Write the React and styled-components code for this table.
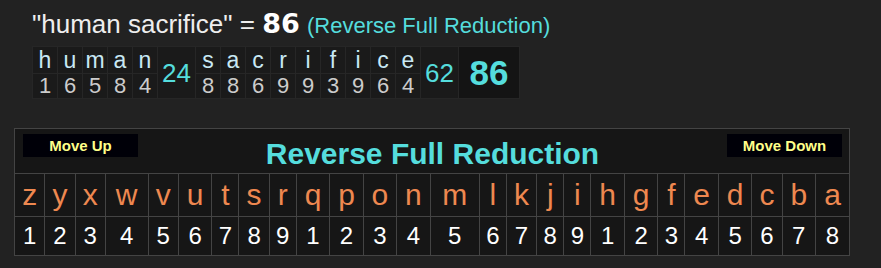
import React from 'react';
import styled, { createGlobalStyle } from 'styled-components';

const GlobalStyle = createGlobalStyle`
  body {
    margin: 0;
    background: #222222;
    font-family: "Liberation Sans", Arial, sans-serif;
  }
`;

const Page = styled.div`
  padding: 9px 14px 0 14px;
`;

const Summary = styled.div`
  padding-left: 18px;
`;

const Heading = styled.div`
  color: #eeeeee;
  font-size: 26px;
  line-height: 30px;
  white-space: nowrap;
`;

const Total = styled.span`
  font-family: "DejaVu Sans", Verdana, sans-serif;
  font-size: 27px;
  font-weight: bold;
  color: #ffffff;
`;

const CipherName = styled.span`
  font-size: 22px;
  color: #55dddd;
`;

const Breakdown = styled.table`
  margin-top: 5px;
  border-collapse: collapse;
  background: #1a1a1a;
  td {
    border: 1px solid #262626;
    padding: 0;
    text-align: center;
  }
`;

const Letter = styled.td`
  width: 24px;
  height: 26px;
  line-height: 26px;
  color: #c8e8f4;
  font-size: 23px;
`;

const Digit = styled.td`
  height: 24px;
  line-height: 24px;
  color: #cccccc;
  font-size: 22px;
`;

const WordSum = styled.td`
  width: 37px;
  color: #55dddd;
  font-size: 26px;
  line-height: 30px;
`;

const PhraseSum = styled.td`
  width: 60px;
  background: #141414;
  color: #55dddd;
  font-size: 35px;
  font-weight: bold;
  line-height: 40px;
`;

const Chart = styled.table`
  margin-top: 29px;
  width: 836px;
  border-collapse: collapse;
  background: #161616;
  border: 1px solid #444444;
  td {
    border: 1px solid #444444;
    padding: 0;
    text-align: center;
  }
`;

const HeaderCell = styled.td`
  height: 44px;
  vertical-align: top;
`;

const HeaderBar = styled.div`
  display: grid;
  grid-template-columns: 115px 1fr 115px;
  align-items: start;
  padding: 5px 7px 0 8px;
`;

const MoveButton = styled.button`
  height: 23px;
  border: none;
  background: #000008;
  color: #ffff88;
  font-family: "Liberation Sans", Arial, sans-serif;
  font-size: 15px;
  font-weight: bold;
  padding: 0;
`;

const Title = styled.div`
  color: #55dddd;
  font-size: 30px;
  font-weight: bold;
  line-height: 32px;
  padding-top: 4px;
`;

const Cell = styled.td`
  height: ${(p) => p.h}px;
  color: ${(p) => p.color};
  font-size: ${(p) => p.size}px;
`;

const words = [
  { letters: 'human', values: [1, 6, 5, 8, 4], sum: 24 },
  { letters: 'sacrifice', values: [8, 8, 6, 9, 9, 3, 9, 6, 4], sum: 62 },
];

const alphabet = 'zyxwvutsrqponmlkjihgfedcba'.split('');
const reduce = (i) => (i % 9) + 1;

export default function App() {
  return (
    <>
      <GlobalStyle />
      <Page>
        <Summary>
          <Heading>
            "human sacrifice" = <Total>86</Total>{' '}
            <CipherName>(Reverse Full Reduction)</CipherName>
          </Heading>
          <Breakdown>
            <tbody>
              <tr>
                {words.map((w) => (
                  <React.Fragment key={w.letters}>
                    {w.letters.split('').map((ch, i) => (
                      <Letter key={i}>{ch}</Letter>
                    ))}
                    <WordSum rowSpan={2}>{w.sum}</WordSum>
                  </React.Fragment>
                ))}
                <PhraseSum rowSpan={2}>86</PhraseSum>
              </tr>
              <tr>
                {words.map((w) =>
                  w.values.map((v, i) => <Digit key={w.letters + i}>{v}</Digit>)
                )}
              </tr>
            </tbody>
          </Breakdown>
        </Summary>
        <Chart>
          <tbody>
            <tr>
              <HeaderCell colSpan={26}>
                <HeaderBar>
                  <MoveButton>Move Up</MoveButton>
                  <Title>Reverse Full Reduction</Title>
                  <MoveButton>Move Down</MoveButton>
                </HeaderBar>
              </HeaderCell>
            </tr>
            <tr>
              {alphabet.map((ch) => (
                <Cell key={ch} h={42} size={30} color="#ee8850">
                  {ch}
                </Cell>
              ))}
            </tr>
            <tr>
              {alphabet.map((ch, i) => (
                <Cell key={ch} h={38} size={24} color="#ffffff">
                  {reduce(i)}
                </Cell>
              ))}
            </tr>
          </tbody>
        </Chart>
      </Page>
    </>
  );
}
